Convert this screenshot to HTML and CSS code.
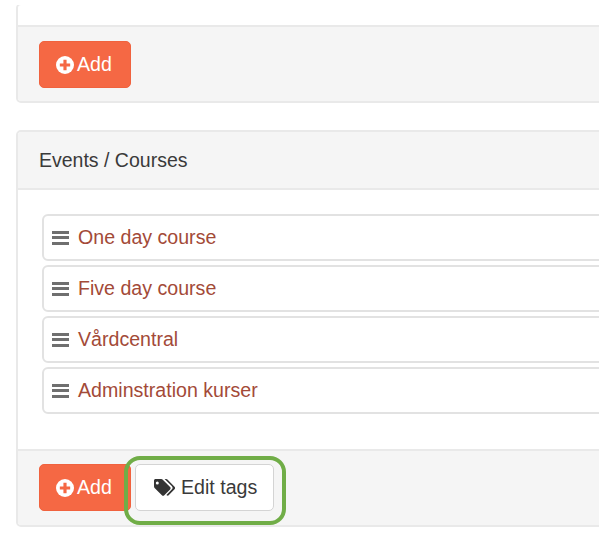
FILE: index.html
```html
<!DOCTYPE html>
<html lang="en">
<head>
    <meta charset="UTF-8">
    <title>Events / Courses</title>
    <link rel="stylesheet" href="styles.css">
</head>
<body>

<div class="page">
    <div class="panel panel-first">
        <div class="panel-body-empty"></div>
        <div class="panel-footer">
            <button class="btn btn-add">
                <svg class="icon-plus" viewBox="0 0 16 16"><circle cx="8" cy="8" r="8" fill="#fff"/><path d="M6.600 3.400h2.800v3.200h3.200v2.800H9.400v3.200H6.600V9.400H3.400V6.600h3.200z" fill="#f56844"/></svg>
                Add
            </button>
        </div>
    </div>

    <div class="panel">
        <div class="panel-heading">Events / Courses</div>
        <div class="panel-body">
            <ul class="course-list">
                <li class="course"><span class="bars"></span><a href="#">One day course</a></li>
                <li class="course"><span class="bars"></span><a href="#">Five day course</a></li>
                <li class="course"><span class="bars"></span><a href="#">Vårdcentral</a></li>
                <li class="course"><span class="bars"></span><a href="#">Adminstration kurser</a></li>
            </ul>
        </div>
        <div class="panel-footer">
            <button class="btn btn-add">
                <svg class="icon-plus" viewBox="0 0 16 16"><circle cx="8" cy="8" r="8" fill="#fff"/><path d="M6.600 3.400h2.800v3.200h3.200v2.800H9.400v3.200H6.600V9.400H3.400V6.600h3.200z" fill="#f56844"/></svg>
                Add
            </button>
            <span class="highlight">
                <button class="btn btn-tags">
                    <svg class="icon-tags" viewBox="0 0 22 18"><path d="M1 1.600C1 .7 1.700 0 2.600 0h5.600c.6 0 1.200.3 1.600.7l7.300 7.400c.7.7.7 1.700 0 2.400l-5.800 5.800c-.7.7-1.700.7-2.400 0L1.600 8.900C1.200 8.500 1 7.900 1 7.300z M4.300 2.500a1.500 1.500 0 1 0 0 3 1.500 1.500 0 0 0 0-3z" fill="#333" fill-rule="evenodd"/><path d="M11.600 0h1.500c.6 0 1.200.3 1.600.7l6.600 6.700c1 1 1 2.200 0 3.200l-5.400 5.500c-.7.7-1.600.7-2.200.1l-.3-.3 5.300-5.400c1.200-1.200 1.200-2.400 0-3.600z" fill="#333"/></svg>
                    Edit tags
                </button>
            </span>
        </div>
    </div>
</div>

</body>
</html>
```

FILE: styles.css
```css
html, body {
    margin: 0;
    padding: 0;
    background-color: white;
}
body {
    font-family: "Liberation Sans", Arial, sans-serif;
    color: #3a3a3a;
}
.page {
    width: 583px;
    height: 542px;
    margin: 5px 0 0 16px;
    overflow: hidden;
}
.panel {
    width: 640px;
    box-sizing: border-box;
    border: 2px solid #e9e9e9;
    border-radius: 5px;
    background-color: white;
}
.panel-first {
    margin-top: -2px;
    margin-bottom: 27px;
}
.panel-body-empty {
    height: 20px;
}
.panel-heading {
    height: 58px;
    box-sizing: border-box;
    padding-left: 21px;
    line-height: 56px;
    font-size: 19.500px;
    background-color: #f5f5f5;
    border-bottom: 2px solid #e9e9e9;
    border-radius: 3px 3px 0 0;
}
.panel-body {
    height: 259px;
    box-sizing: border-box;
    padding: 24px 0 0 24px;
}
.panel-footer {
    display: flex;
    gap: 4px;
    height: 76px;
    box-sizing: border-box;
    padding: 13px 0 0 21px;
    background-color: #f5f5f5;
    border-top: 2px solid #e9e9e9;
    border-radius: 0 0 3px 3px;
}
.panel-first .panel-footer {
    padding-top: 14px;
}
.course-list {
    list-style-type: none;
    margin: 0;
    padding: 0;
    display: flex;
    flex-direction: column;
    gap: 4px;
}
.course {
    display: flex;
    align-items: center;
    gap: 9px;
    height: 47px;
    box-sizing: border-box;
    padding-left: 8px;
    border: 2px solid #e2e2e2;
    border-radius: 6px;
    font-size: 19.600px;
}
.course a {
    color: #a34a38;
    text-decoration: none;
}
.bars {
    width: 17px;
    height: 14px;
    box-sizing: border-box;
    border-top: 3px solid #6f6f6f;
    border-bottom: 3px solid #6f6f6f;
    position: relative;
}
.bars::before {
    content: "";
    position: absolute;
    left: 0;
    right: 0;
    top: 2.500px;
    height: 3px;
    background-color: #6f6f6f;
}
.btn {
    display: flex;
    align-items: center;
    height: 47px;
    box-sizing: border-box;
    border-radius: 5px;
    font-family: inherit;
    font-size: 19.600px;
    cursor: pointer;
}
.btn-add {
    width: 92px;
    gap: 3px;
    padding: 0 0 0 16px;
    color: white;
    background-color: #f56844;
    border: 1px solid #f0623e;
}
.btn-tags {
    width: 139px;
    gap: 6px;
    padding: 0 0 0 17px;
    color: #3a3a3a;
    background-color: white;
    border: 1px solid #d4d4d4;
}
.icon-plus {
    width: 18px;
    height: 18px;
}
.icon-tags {
    width: 22px;
    height: 18px;
}
.highlight {
    position: relative;
}
.highlight::after {
    content: "";
    position: absolute;
    left: -11px;
    top: -8px;
    width: 162px;
    height: 69px;
    box-sizing: border-box;
    border: 4px solid #70ad47;
    border-radius: 16px;
}
```
